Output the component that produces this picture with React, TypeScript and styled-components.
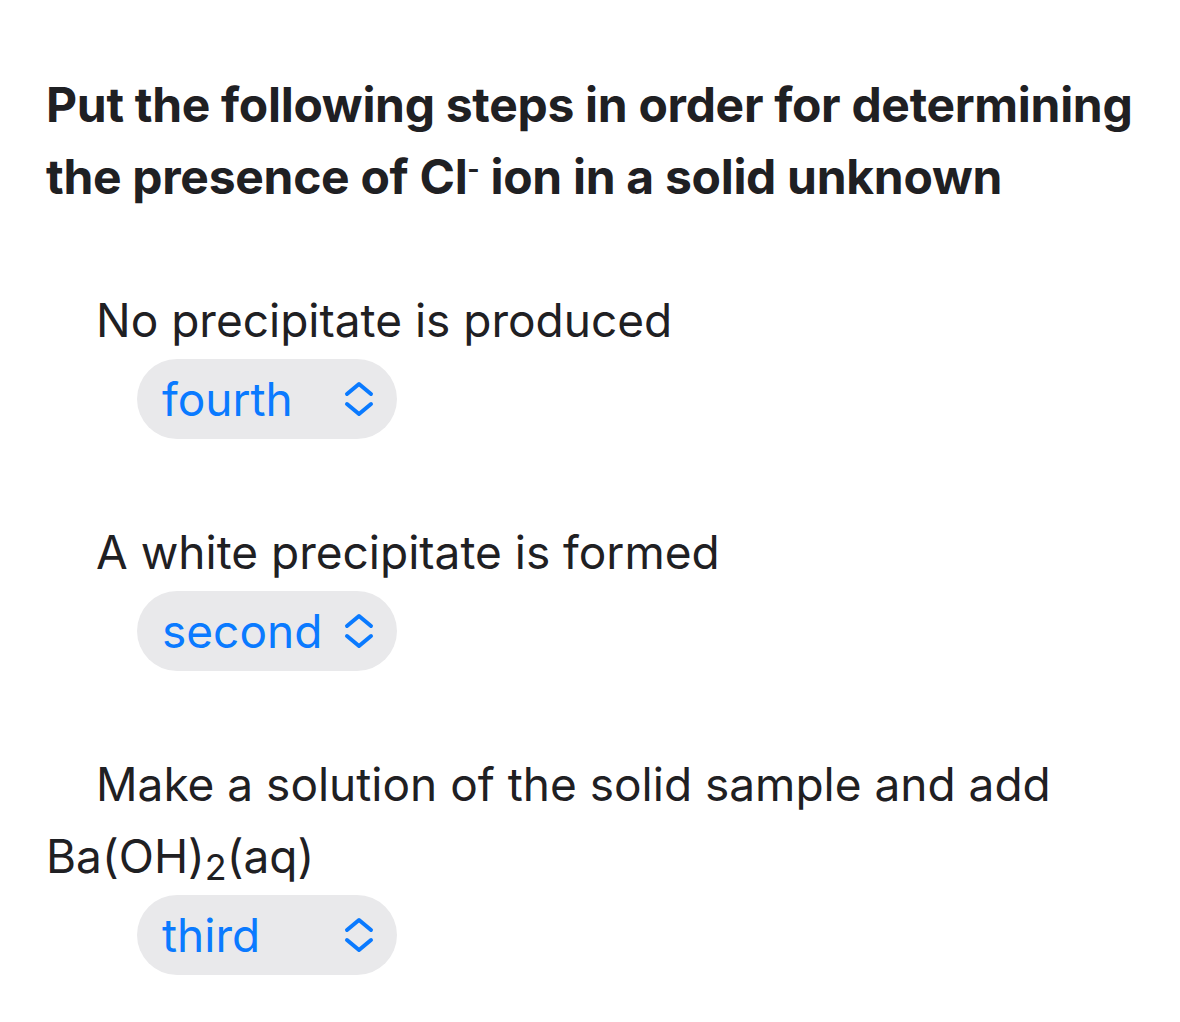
import React from 'react'
import styled, { createGlobalStyle } from 'styled-components'

const GlobalStyle = createGlobalStyle`
  html, body {
    margin: 0;
    padding: 0;
    background: #ffffff;
  }
  body {
    font-family: Inter, "Noto Sans", "Liberation Sans", sans-serif;
    color: #1f2023;
  }
`

const Page = styled.div`
  padding: 69px 36px 0 46px;
`

const Title = styled.h2`
  margin: 0 0 71px;
  font-size: 48px;
  line-height: 72px;
  font-weight: 700;
  letter-spacing: -0.3px;

  sup {
    font-size: 0.55em;
    line-height: 1;
    vertical-align: 0.6em;
  }
`

const Step = styled.div`
  display: flex;
  flex-direction: column;
  align-items: flex-start;
  margin-bottom: 77px;

  &:last-child {
    margin-bottom: 0;
  }
`

const Label = styled.div`
  font-size: 46px;
  line-height: 72px;
  text-indent: 50px;
  font-weight: 400;

  sub {
    font-size: 0.78em;
    line-height: 1;
    vertical-align: -0.2em;
  }
`

const Pill = styled.div`
  margin: 3px 0 0 91px;
  width: 260px;
  height: 80px;
  box-sizing: border-box;
  padding: 0 21px 0 25px;
  border-radius: 40px;
  background: #e9e9eb;
  display: flex;
  align-items: center;
  justify-content: space-between;
  color: #0a7aff;
  font-size: 46px;
`

const Chevrons = () => (
  <svg width="34" height="36" viewBox="0 0 34 36" fill="none">
    <path d="M5 13 L17 3 L29 13" stroke="#0a7aff" strokeWidth="4" strokeLinecap="round" strokeLinejoin="round" />
    <path d="M5 23 L17 33 L29 23" stroke="#0a7aff" strokeWidth="4" strokeLinecap="round" strokeLinejoin="round" />
  </svg>
)

type Item = { label: React.ReactNode; value: string }

const items: Item[] = [
  { label: 'No precipitate is produced', value: 'fourth' },
  { label: 'A white precipitate is formed', value: 'second' },
  {
    label: (
      <>
        Make a solution of the solid sample and add Ba(OH)<sub>2</sub>(aq)
      </>
    ),
    value: 'third',
  },
]

export default function App() {
  return (
    <Page>
      <GlobalStyle />
      <Title>
        Put the following steps in order for determining the presence of Cl<sup>-</sup> ion in a solid unknown
      </Title>
      {items.map((it, i) => (
        <Step key={i}>
          <Label>{it.label}</Label>
          <Pill>
            <span>{it.value}</span>
            <Chevrons />
          </Pill>
        </Step>
      ))}
    </Page>
  )
}
